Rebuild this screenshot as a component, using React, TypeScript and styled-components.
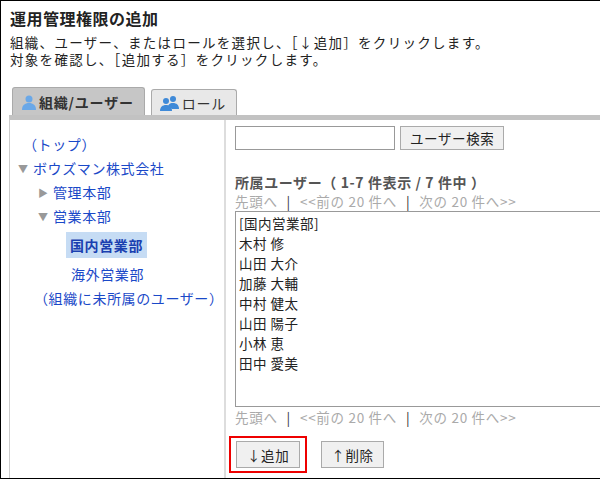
import React from "react";
import styled, { createGlobalStyle } from "styled-components";

const G = createGlobalStyle`
  html,body{margin:0;padding:0;background:#fff;}
  body{font-family:"Noto Sans CJK JP","Noto Sans",sans-serif;font-size:13px;color:#222;}
`;
const Frame = styled.div`
  width:600px;height:479px;box-sizing:border-box;border:1px solid #000;border-right:none;
  position:relative;overflow:hidden;background:#fff;
`;
const Head = styled.div`padding:5px 0 0 9px;`;
const Title = styled.h1`margin:0;font-size:16px;font-weight:bold;line-height:24px;letter-spacing:0.5px;`;
const Desc = styled.div`font-size:13.5px;line-height:17px;margin-top:4px;letter-spacing:1.3px;`;
const Tabs = styled.div`display:flex;gap:6px;margin:19px 0 0 11px;height:28px;align-items:flex-end;`;
const Tab = styled.div<{ $active?: boolean }>`
  height:${p => (p.$active ? 28 : 26)}px;box-sizing:border-box;padding:0 10px 0 8px;display:flex;align-items:center;gap:2px;
  border:1px solid #aaa;border-bottom:none;border-radius:3px 3px 0 0;
  background:${p => (p.$active ? "#c6c6c6" : "#e8e8e8")};font-size:14px;letter-spacing:0.8px;
  font-weight:${p => (p.$active ? "bold" : "normal")};color:#333;
`;
const Panel = styled.div`
  margin-left:8px;border-left:1px solid #ccc;border-top:5px solid #c2c2c2;display:flex;height:360px;
`;
const Left = styled.div`width:216px;border-right:2px solid #ddd;padding-top:12px;box-sizing:border-box;`;
const Node = styled.div<{ $indent: number }>`
  display:flex;align-items:center;height:24px;padding-left:${p => p.$indent}px;color:#1a49c8;font-size:14px;letter-spacing:0.6px;
`;
const Tri = styled.span`width:15px;color:#999;font-size:10px;`;
const Sel = styled.span`background:#c6dcf4;font-weight:bold;padding:3px 4px;color:#1a3fb0;`;
const Right = styled.div`flex:1;padding:6px 0 0 9px;`;
const Row = styled.div`display:flex;gap:5px;align-items:center;`;
const Input = styled.div`width:160px;height:24px;box-sizing:border-box;border:1px solid #999;`;
const Btn = styled.div`
  height:24px;box-sizing:border-box;border:1px solid #aaa;background:#f0f0f0;display:flex;align-items:center;
  padding:0 9px;font-size:13.5px;color:#222;letter-spacing:0.6px;
`;
const H2 = styled.div`margin-top:23px;font-weight:bold;font-size:14px;color:#555;line-height:18px;letter-spacing:0.6px;`;
const Nav = styled.div`color:#aaa;font-size:13.5px;line-height:20px;letter-spacing:0.7px;span{color:#333;margin:0 9px;}`;
const List = styled.div`border:1px solid #999;border-right:none;height:196px;box-sizing:border-box;padding:1px 3px;line-height:20px;font-size:13.5px;letter-spacing:0.5px;`;
const Actions = styled.div`display:flex;gap:14px;margin-top:9px;align-items:center;`;
const Red = styled.div`border:2px solid #e00;padding:3px 5px;margin-left:-6px;`;

const User = ({ c }: { c: string }) => (
  <svg width="16" height="16" viewBox="0 0 16 16"><circle cx="8" cy="5" r="3.5" fill={c}/><path d="M1 16c0-5 3-7 7-7s7 2 7 7z" fill={c}/></svg>
);
const Users = () => (
  <svg width="20" height="16" viewBox="0 0 20 16"><circle cx="6" cy="6" r="3" fill="#3f8ad8"/><path d="M0 16c0-4 2.5-6 6-6s6 2 6 6z" fill="#3f8ad8"/><circle cx="13" cy="4" r="3" fill="#3f8ad8"/><path d="M8 11c1-2.5 3-3 5-3 3.5 0 6 2 6 6h-7z" fill="#3f8ad8"/></svg>
);

export default function App() {
  const users = ["[国内営業部]", "木村 修", "山田 大介", "加藤 大輔", "中村 健太", "山田 陽子", "小林 恵", "田中 愛美"];
  const nav = (<Nav>先頭へ<span>|</span>&lt;&lt;前の 20 件へ<span>|</span>次の 20 件へ&gt;&gt;</Nav>);
  return (
    <Frame>
      <G />
      <Head>
        <Title>運用管理権限の追加</Title>
        <Desc>組織、ユーザー、またはロールを選択し、［↓追加］をクリックします。<br />対象を確認し、［追加する］をクリックします。</Desc>
      </Head>
      <Tabs>
        <Tab $active><User c="#6aa8e8" />組織/ユーザー</Tab>
        <Tab><Users />ロール</Tab>
      </Tabs>
      <Panel>
        <Left>
          <Node $indent={13}>（トップ）</Node>
          <Node $indent={8}><Tri>▼</Tri>ボウズマン株式会社</Node>
          <Node $indent={28}><Tri>▶</Tri>管理本部</Node>
          <Node $indent={28}><Tri>▼</Tri>営業本部</Node>
          <Node $indent={56} style={{ height: 34 }}><Sel>国内営業部</Sel></Node>
          <Node $indent={61}>海外営業部</Node>
          <Node $indent={24}>（組織に未所属のユーザー）</Node>
        </Left>
        <Right>
          <Row><Input /><Btn>ユーザー検索</Btn></Row>
          <H2>所属ユーザー（ 1-7 件表示 / 7 件中 ）</H2>
          {nav}
          <List>{users.map(u => <div key={u}>{u}</div>)}</List>
          {nav}
          <Actions>
            <Red><Btn style={{ height: 27, padding: "0 10px" }}>↓追加</Btn></Red>
            <Btn style={{ height: 27 }}>↑削除</Btn>
          </Actions>
        </Right>
      </Panel>
    </Frame>
  );
}
